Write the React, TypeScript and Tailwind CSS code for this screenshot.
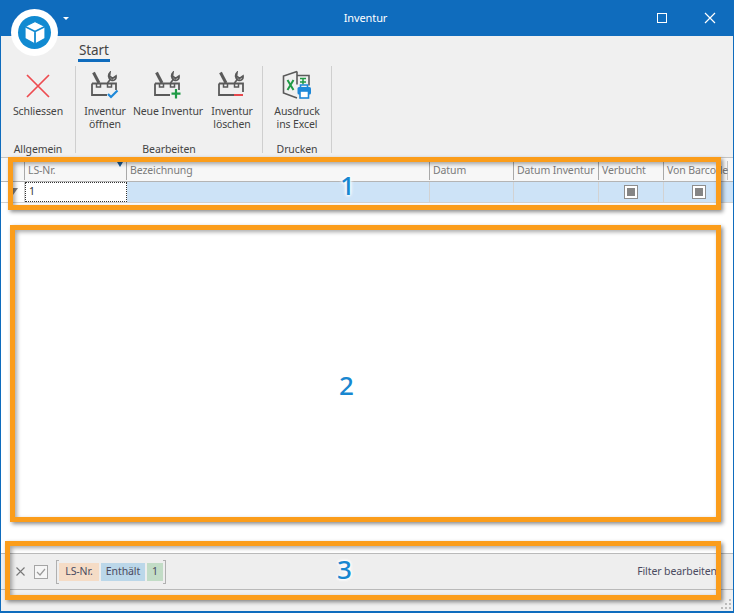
import React from "react";

function Toolbox({ badge }: { badge: "check" | "plus" | "minus" }) {
  return (
    <svg width="30" height="28" viewBox="0 0 30 28" fill="none">
      <path d={badge === "minus" ? "M2 12.5H26V21M2 12.5V24H17" : "M2 12.5H26V19M2 12.5V24H17"} stroke="#5a5a5a" strokeWidth="1.8" />
      <path d="M3.5 1.5 L9 12" stroke="#5a5a5a" strokeWidth="3" />
      <path d="M6.5 12.5v3.5h4v-3.5M17.5 12.5v3.5h4v-3.5" stroke="#5a5a5a" strokeWidth="1.5" />
      <path d="M17.5 12 L21 7.5 M20 1.5 L19.5 5 L22.5 7.5 L26 5 C26.5 8 24 10.5 21 9 C18 7.5 18 3.5 20 1.5Z" stroke="#5a5a5a" strokeWidth="1.7" />
      {badge === "check" && <path d="M18 23l3 3 6.5-6.5" stroke="#1e88d8" strokeWidth="2.2" />}
      {badge === "plus" && <path d="M23 18v9.5M18.5 22.7h9" stroke="#1f9a45" strokeWidth="2.2" />}
      {badge === "minus" && <path d="M17 24h9" stroke="#e5484d" strokeWidth="2" />}
    </svg>
  );
}

function ExcelIcon() {
  return (
    <svg width="30" height="30" viewBox="0 0 30 30" fill="none">
      <path d="M15 1.5 L1.5 6v17L15 28" stroke="#5a5a5a" strokeWidth="1.6" />
      <path d="M15 1.5v13" stroke="#5a5a5a" strokeWidth="1.6" />
      <path d="M15 5.5h12v10" stroke="#5a5a5a" strokeWidth="1.6" />
      <path d="M5.5 10l6 10M11.5 10l-6 10" stroke="#1f9a45" strokeWidth="2" />
      <path d="M18 8.5h6M18 12h6M21 8.5v6" stroke="#1f9a45" strokeWidth="1.5" />
      <path d="M18.5 17v-2h7v2" stroke="#1e88d8" strokeWidth="1.6" />
      <rect x="15.5" y="17" width="13.5" height="7.5" rx="1.5" fill="#1e88d8" />
      <rect x="18" y="21" width="8.5" height="7" fill="#fff" stroke="#1e88d8" strokeWidth="1.6" />
    </svg>
  );
}

function BigButton({ icon, lines, className }: { icon: React.ReactNode; lines: string[]; className: string }) {
  return (
    <div className={`flex flex-col items-center ${className}`}>
      <div className="h-[30px] flex items-center justify-center">{icon}</div>
      <div className="mt-[5px] text-center leading-[13px] text-[#444]">
        {lines.map((l) => (
          <div key={l} className="whitespace-nowrap">{l}</div>
        ))}
      </div>
    </div>
  );
}

function Group({ label, width, children }: { label: string; width: string; children: React.ReactNode }) {
  return (
    <div className={`${width} shrink-0 flex flex-col h-[87px] border-r border-[#cfcfcf]`}>
      <div className="flex-1 flex pt-[4px]">{children}</div>
      <div className="text-center leading-[13px] text-[#444] h-[13px] mb-[-1px] translate-y-[2px]">{label}</div>
    </div>
  );
}

function HeaderCell({ w, label }: { w: string; label: string }) {
  return (
    <div className={`${w} shrink-0 pl-[3px] flex items-center text-[#7b7b7b] border-r border-[#a9a9a9] mt-[3px] mb-[1px] whitespace-nowrap`}>
      {label}
    </div>
  );
}

function Check() {
  return (
    <div className="w-[14px] h-[14px] bg-white border border-[#8e8e8e] flex items-center justify-center">
      <div className="w-[8px] h-[8px] bg-[#858585]" />
    </div>
  );
}

function Annot({ cls }: { cls: string }) {
  return <div className={`absolute border-[5px] border-[#fb9d1b] shadow-[2px_2px_4px_rgba(0,0,0,0.45),inset_2px_2px_4px_rgba(0,0,0,0.35)] ${cls}`} />;
}

function Num({ cls, n }: { cls: string; n: string }) {
  return (
    <div className={`absolute text-[26px] font-medium leading-[36px] text-[#1887d0] [text-shadow:0_0_3px_#fff,0_0_3px_#fff,0_0_4px_#fff,0_0_4px_#fff] ${cls}`}>
      {n}
    </div>
  );
}

export default function App() {
  return (
    <div
      className="relative w-[734px] h-[613px] flex flex-col overflow-hidden text-[10.5px] bg-[#f0f0f0] border-x border-b-2 border-[#0f6cbd]"
      style={{ fontFamily: '"Noto Sans", "Open Sans", sans-serif', letterSpacing: "-0.1px" }}
    >
      {/* Title bar */}
      <div className="h-[36px] shrink-0 -mx-px bg-[#0f6cbd] text-white text-[11px] relative flex items-center justify-center">
        <span className="ml-[-3px]">Inventur</span>
        <div className="absolute left-[63px] top-[17px] w-0 h-0 border-x-[3px] border-x-transparent border-t-[3px] border-t-white" />
        <div className="absolute right-[67px] top-[13px] w-[10px] h-[10px] border-[1.5px] border-white" />
        <svg className="absolute right-[18px] top-[12px]" width="12" height="12" viewBox="0 0 12 12" stroke="white" strokeWidth="1.2">
          <path d="M1 1l10 10M11 1L1 11" />
        </svg>
      </div>

      {/* Ribbon */}
      <div className="h-[121px] shrink-0 bg-[#f0f0f0] flex flex-col">
        <div className="h-[30px] shrink-0 pl-[77px] pt-[5px]">
          <div className="inline-block text-[13.5px] leading-[18px] text-[#444] border-b-[3px] border-[#0f6cbd] px-[1px]">Start</div>
        </div>
        <div className="flex">
          <Group label="Allgemein" width="w-[75px]">
            <BigButton
              className="w-full"
              icon={
                <svg className="translate-y-[1px]" width="24" height="24" viewBox="0 0 24 24" stroke="#ee4b50" strokeWidth="1.7" fill="none">
                  <path d="M1 1l22 22M23 1L1 23" />
                </svg>
              }
              lines={["Schliessen"]}
            />
          </Group>
          <Group label="Bearbeiten" width="w-[187px]">
            <BigButton className="w-[56px] pl-[2px]" icon={<Toolbox badge="check" />} lines={["Inventur", "öffnen"]} />
            <BigButton className="w-[72px]" icon={<Toolbox badge="plus" />} lines={["Neue Inventur"]} />
            <BigButton className="w-[56px]" icon={<Toolbox badge="minus" />} lines={["Inventur", "löschen"]} />
          </Group>
          <Group label="Drucken" width="w-[69px]">
            <BigButton className="w-full" icon={<ExcelIcon />} lines={["Ausdruck", "ins Excel"]} />
          </Group>
        </div>
      </div>

      {/* Grid */}
      <div className="flex-1 min-h-0 flex flex-col bg-white border-t border-[#c4c4c4]">
        <div className="h-[24px] shrink-0 flex bg-[#f7f7f7] border-b border-[#b4b4b4]">
          <div className="w-[24px] shrink-0 border-r border-[#a9a9a9] mt-[3px] mb-[1px]" />
          <div className="w-[102px] shrink-0 relative pl-[3px] flex items-center text-[#7b7b7b] border-r border-[#a9a9a9] mt-[3px] mb-[1px]">
            LS-Nr.
            <div className="absolute right-[3px] top-[1px] w-0 h-0 border-x-[3px] border-x-transparent border-t-[5px] border-t-[#1c5a93]" />
          </div>
          <HeaderCell w="w-[303px]" label="Bezeichnung" />
          <HeaderCell w="w-[84px]" label="Datum" />
          <HeaderCell w="w-[85px]" label="Datum Inventur" />
          <HeaderCell w="w-[65px]" label="Verbucht" />
          <div className="w-[64px] shrink-0 pl-[3px] flex items-center text-[#7b7b7b] border-r border-[#c4c4c4] mt-[3px] mb-[1px] whitespace-nowrap">Von Barcode</div>
        </div>
        <div className="h-[21px] shrink-0 flex bg-[#cde3f7] border-b border-[#d2d2d2]">
          <div className="w-[24px] shrink-0 bg-white border-r border-[#d2d2d2] relative">
            <div className="absolute left-[12px] top-[6px] w-0 h-0 border-t-[7px] border-t-[#808080] border-r-[5px] border-r-transparent" />
          </div>
          <div className="w-[102px] shrink-0 bg-white border border-dotted border-[#333] pl-[3px] flex items-center text-[#333]">1</div>
          <div className="w-[303px] shrink-0 border-r border-[#d2d2d2]" />
          <div className="w-[84px] shrink-0 border-r border-[#d2d2d2]" />
          <div className="w-[85px] shrink-0 border-r border-[#d2d2d2]" />
          <div className="w-[65px] shrink-0 border-r border-[#d2d2d2] flex items-center justify-center"><Check /></div>
          <div className="flex-1 flex items-center justify-center"><Check /></div>
        </div>
      </div>

      {/* Filter panel */}
      <div className="h-[37px] shrink-0 bg-[#eeeeee] border-y border-[#b9b9b9] flex items-center pl-[15px] pr-[16px] text-[#4a4a60]">
        <svg width="9" height="9" viewBox="0 0 9 9" stroke="#777" strokeWidth="1.1"><path d="M0.5 0.5l8 8M8.5 0.5l-8 8" /></svg>
        <div className="ml-[9px] w-[14px] h-[14px] border border-[#a5a5a5] bg-[#f6f6f6] flex items-center justify-center">
          <svg width="10" height="8" viewBox="0 0 10 8" fill="none" stroke="#9a9a9a" strokeWidth="1.2"><path d="M1 4l3 3 5-6" /></svg>
        </div>
        <div className="ml-[8px] h-[24px] flex items-center gap-[2px] relative px-[3px]">
          <div className="absolute left-0 top-0 bottom-0 w-[3px] border-l border-y border-[#b0b0b0]" />
          <div className="absolute right-0 top-0 bottom-0 w-[3px] border-r border-y border-[#b0b0b0]" />
          <div className="h-[18px] w-[40px] bg-[#f5dcc6] flex items-center justify-center">LS-Nr.</div>
          <div className="h-[18px] w-[44px] bg-[#bbd7e9] flex items-center justify-center">Enthält</div>
          <div className="h-[18px] w-[16px] bg-[#c2dcc6] flex items-center justify-center">1</div>
        </div>
        <div className="ml-auto">Filter bearbeiten</div>
      </div>

      {/* Status */}
      <div className="h-[21px] shrink-0 bg-[#f0f0f0] relative">
        <svg className="absolute right-[1px] bottom-[1px]" width="12" height="12" viewBox="0 0 12 12" fill="#bdbdbd">
          <rect x="9" y="1" width="2" height="2" /><rect x="5" y="5" width="2" height="2" /><rect x="9" y="5" width="2" height="2" />
          <rect x="1" y="9" width="2" height="2" /><rect x="5" y="9" width="2" height="2" /><rect x="9" y="9" width="2" height="2" />
        </svg>
      </div>

      {/* Logo overlay */}
      <div className="absolute left-[10px] top-[9px] w-[47px] h-[47px] rounded-full bg-white flex items-center justify-center">
        <div className="w-[33px] h-[33px] rounded-full bg-[#118ad1] flex items-center justify-center">
          <svg width="24" height="25" viewBox="0 0 24 25" fill="#fff" stroke="#118ad1" strokeWidth="1.2" strokeLinejoin="round">
            <path d="M12 1.5l10 5v12l-10 5.5-10-5.5v-12z" />
            <path d="M2 6.5l10 5 10-5M12 11.5V24" fill="none" strokeWidth="1.8" />
          </svg>
        </div>
      </div>

      {/* Annotations */}
      <Annot cls="left-[7px] top-[157px] w-[713px] h-[53px]" />
      <Annot cls="left-[9px] top-[225px] w-[711px] h-[297px]" />
      <Annot cls="left-[4px] top-[541px] w-[716px] h-[59px]" />
      <Num cls="left-[339px] top-[167px]" n="1" />
      <Num cls="left-[338px] top-[367px]" n="2" />
      <Num cls="left-[336px] top-[551px]" n="3" />
    </div>
  );
}
